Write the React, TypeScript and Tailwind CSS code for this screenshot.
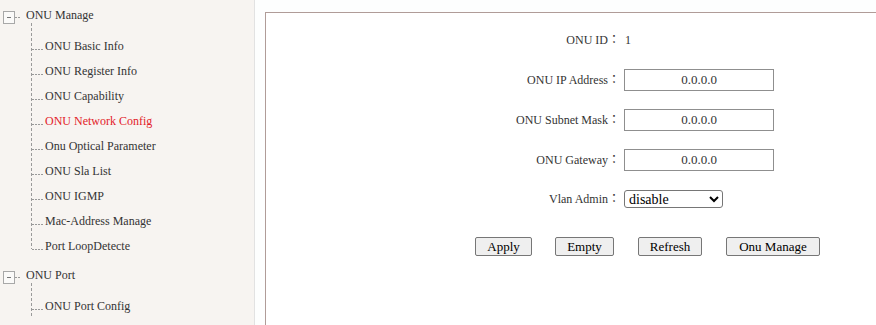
import React from "react";

const FONT = { fontFamily: '"Liberation Serif", "Noto Sans CJK TC", serif' };

const Conn = ({ last }: { last?: boolean }) => (
  <svg width="14" height="25" className="shrink-0">
    <line x1="0.5" y1="0" x2="0.5" y2={last ? 16 : 25} stroke="#9a9a9a" strokeDasharray="3 2" />
    <line x1="1" y1="16.5" x2="13" y2="16.5" stroke="#9a9a9a" strokeDasharray="2 1" />
  </svg>
);

const ParentIcon = () => (
  <svg width="26" height="24" className="shrink-0">
    <rect x="3.5" y="8.5" width="11" height="12" fill="#fbfaf9" stroke="#a8a8a8" />
    <line x1="7" y1="14.5" x2="11" y2="14.5" stroke="#777" />
    <line x1="15" y1="14.5" x2="20" y2="14.5" stroke="#9a9a9a" strokeDasharray="2 1" />
  </svg>
);

const Spacer = () => (
  <svg width="2" height="10" className="-mt-[4px] ml-[31px] block">
    <line x1="0.5" y1="0" x2="0.5" y2="10" stroke="#9a9a9a" strokeDasharray="3 2" />
  </svg>
);

function Group({ title, items, active, open }: { title: string; items: string[]; active?: string; open?: boolean }) {
  return (
    <div>
      <div className="flex items-center h-[24px]">
        <ParentIcon />
        <span className="text-[12px] text-[#333]">{title}</span>
      </div>
      <Spacer />
      {items.map((it, i) => (
        <div key={it} className="flex items-center h-[25px] pl-[31px]">
          <Conn last={!open && i === items.length - 1} />
          <span className={`text-[12px] ${it === active ? "text-[#e32229]" : "text-[#333]"}`}>{it}</span>
        </div>
      ))}
    </div>
  );
}

function Row({ label, children, className = "" }: { label: string; children: React.ReactNode; className?: string }) {
  return (
    <div className={`flex items-center h-[22px] ${className}`}>
      <div className="w-[354px] text-right text-[12px] text-[#333] shrink-0">{label}：</div>
      {children}
    </div>
  );
}

function Field() {
  return (
    <input
      readOnly
      value="0.0.0.0"
      className="ml-[4px] w-[150px] h-[22px] border border-[#8f8f8f] bg-white text-center text-[13px] text-[#333] outline-none"
    />
  );
}

function Btn({ label, w, className = "" }: { label: string; w: string; className?: string }) {
  return (
    <button
      className={`${w} ${className} h-[19px] bg-[#efefef] border border-[#767676] rounded-[2px] text-[13px] text-black leading-none`}
    >
      {label}
    </button>
  );
}

export default function App() {
  return (
    <div className="flex w-[876px] h-[325px] overflow-hidden bg-white" style={FONT}>
      <div className="w-[255px] shrink-0 bg-[#f7f4f1] border-r border-[#e2e2e2] pt-[3px]">
        <Group
          title="ONU Manage"
          active="ONU Network Config"
          items={[
            "ONU Basic Info",
            "ONU Register Info",
            "ONU Capability",
            "ONU Network Config",
            "Onu Optical Parameter",
            "ONU Sla List",
            "ONU IGMP",
            "Mac-Address Manage",
            "Port LoopDetecte",
          ]}
        />
        <div className="h-[5px]" />
        <Group title="ONU Port" items={["ONU Port Config"]} open />
      </div>
      <div className="flex-1 pl-[10px] pt-[12px] bg-[#fdfefe]">
        <div className="h-full border-l border-t border-[#b09c98] bg-white pt-[16px]">
          <Row label="ONU ID">
            <span className="ml-[5px] text-[12px] text-[#333]">1</span>
          </Row>
          <Row label="ONU IP Address" className="mt-[18px]">
            <Field />
          </Row>
          <Row label="ONU Subnet Mask" className="mt-[18px]">
            <Field />
          </Row>
          <Row label="ONU Gateway" className="mt-[18px]">
            <Field />
          </Row>
          <Row label="Vlan Admin" className="mt-[17px]">
            <select
              defaultValue="disable"
              className="ml-[4px] w-[99px] h-[18px] border border-[#767676] rounded-[3px] bg-white text-[14px] text-black"
            >
              <option value="disable">disable</option>
              <option value="enable">enable</option>
            </select>
          </Row>
          <div className="flex items-center mt-[27px] pl-[209px]">
            <Btn label="Apply" w="w-[57px]" />
            <Btn label="Empty" w="w-[59px]" className="ml-[23px]" />
            <Btn label="Refresh" w="w-[64px]" className="ml-[24px]" />
            <Btn label="Onu Manage" w="w-[94px]" className="ml-[24px]" />
          </div>
        </div>
      </div>
    </div>
  );
}
